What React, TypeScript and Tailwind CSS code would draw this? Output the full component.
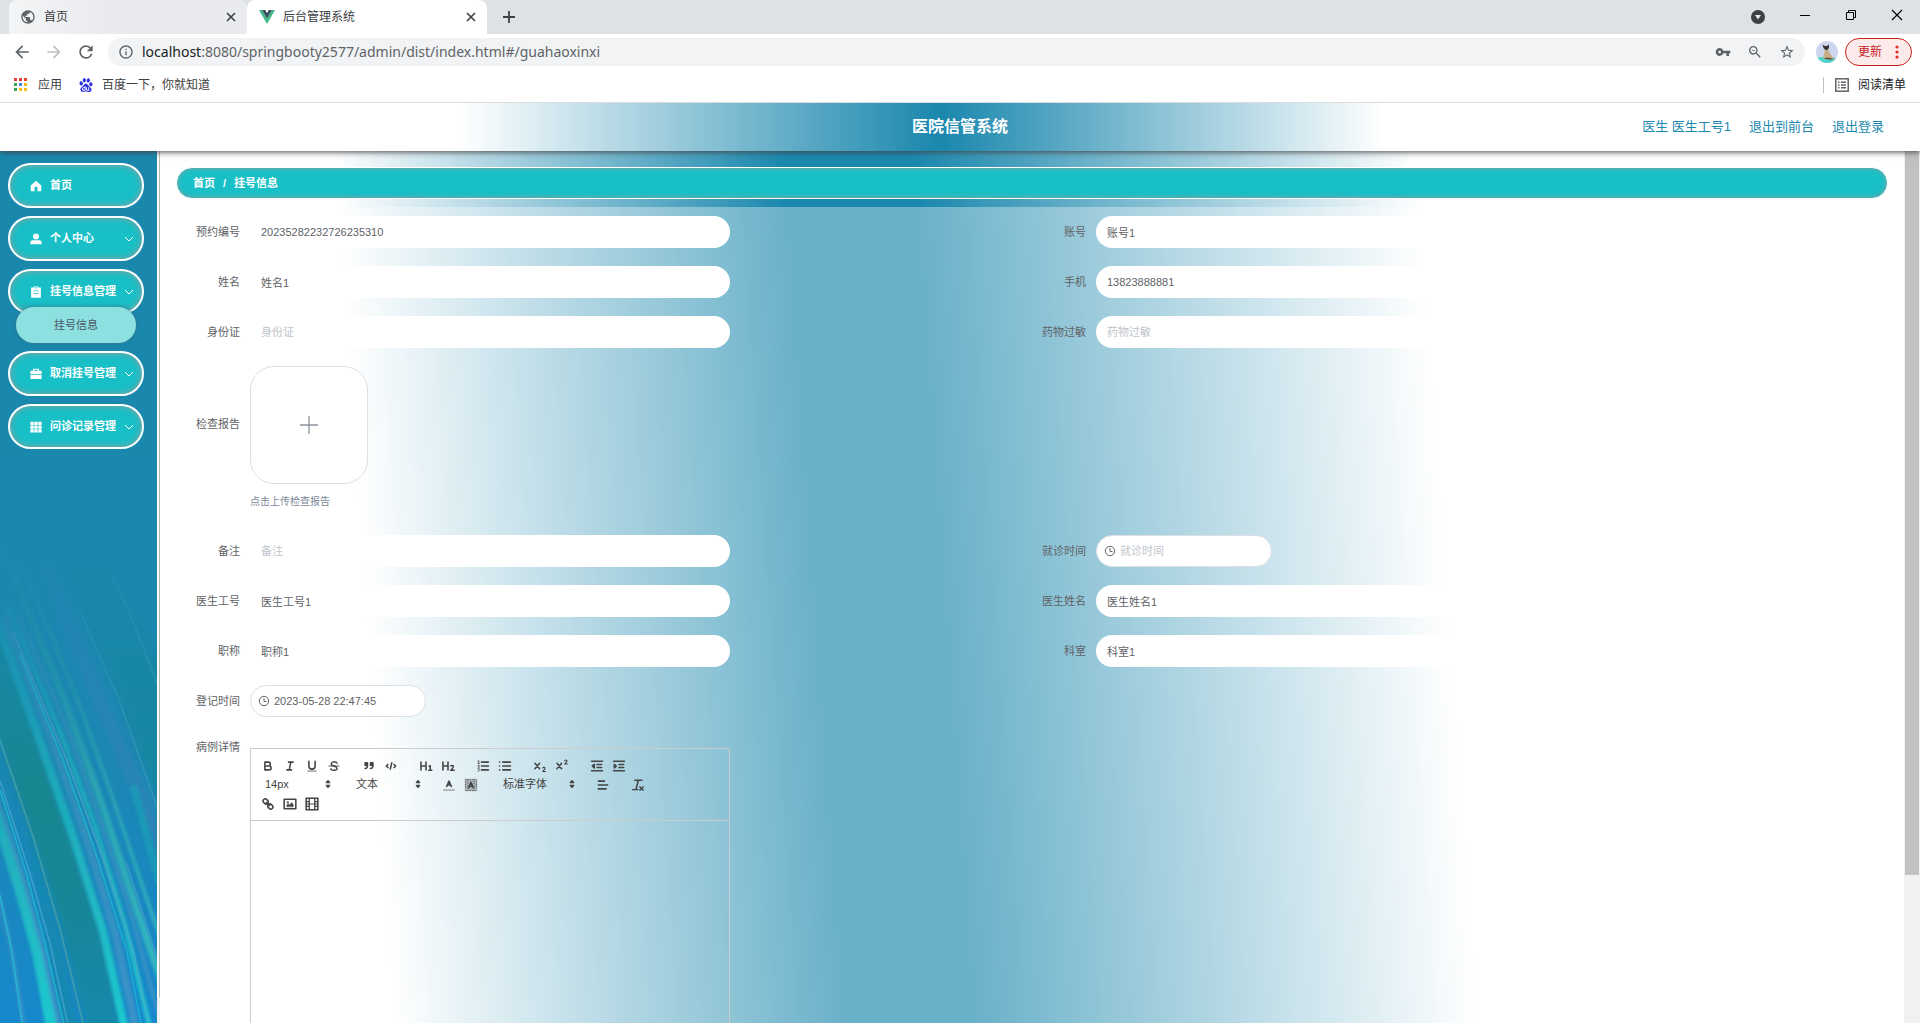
import type { ReactNode } from "react";
import {
  MdArrowBack,
  MdArrowForward,
  MdInfoOutline,
  MdPublic,
  MdRefresh,
  MdStarBorder,
  MdVpnKey,
  MdZoomOut,
} from "react-icons/md";
import { SiBaidu } from "react-icons/si";

/* ---------- browser frame ---------- */

function CloseMark() {
  return (
    <svg viewBox="0 0 10 10" className="size-[10px]" stroke="#3c4043" strokeWidth="1.6" fill="none">
      <path d="M1 1l8 8M9 1l-8 8" />
    </svg>
  );
}

function VueLogo() {
  return (
    <svg viewBox="0 0 16 16" className="size-4">
      <path d="M0 1h3.2L8 9.400 12.800 1H16L8 15z" fill="#41b883" />
      <path d="M3.200 1h3L8 4.200 9.800 1h3L8 9.400z" fill="#35495e" />
    </svg>
  );
}

function TabStrip() {
  return (
    <div className="flex h-[34px] items-stretch bg-[#dee1e6] pl-[9px] text-xs text-[#3c4043]">
      <div className="flex w-[238px] items-center rounded-t-lg bg-gradient-to-r from-[#f4f5f6] to-[#e9ebef] to-40% pr-[11px] pl-[11px]">
        <MdPublic className="size-4 text-[#5f6368]" />
        <span className="ml-2 flex-1">首页</span>
        <button type="button" aria-label="关闭 首页">
          <CloseMark />
        </button>
      </div>
      <div className="flex w-[240px] items-center rounded-t-lg bg-white pr-[11px] pl-3">
        <VueLogo />
        <span className="ml-2 flex-1">后台管理系统</span>
        <button type="button" aria-label="关闭 后台管理系统">
          <CloseMark />
        </button>
      </div>
      <button type="button" aria-label="新标签页" className="ml-4">
        <svg viewBox="0 0 12 12" className="size-3" stroke="#3c4043" strokeWidth="1.8">
          <path d="M6 0v12M0 6h12" />
        </svg>
      </button>
      <div className="ml-auto flex items-center gap-[34px] pr-[17px]">
        <button type="button" aria-label="搜索标签页">
          <svg viewBox="0 0 14 14" className="size-[14px]">
            <circle cx="7" cy="7" r="7" fill="#3c4043" />
            <path d="M4 5h6L7 9.500z" fill="#e8eaed" />
          </svg>
        </button>
        <button type="button" aria-label="最小化" className="pb-1">
          <svg viewBox="0 0 12 12" className="size-3" stroke="#000" shapeRendering="crispEdges">
            <path d="M1 6.500h10" />
          </svg>
        </button>
        <button type="button" aria-label="还原" className="pb-1">
          <svg viewBox="0 0 12 12" className="size-3" stroke="#000" fill="none">
            <path d="M1.500 3.500h7v7h-7zM3.500 3.500v-2h7v7h-2" />
          </svg>
        </button>
        <button type="button" aria-label="关闭" className="pb-1">
          <svg viewBox="0 0 12 12" className="size-3" stroke="#000" strokeWidth="1.200">
            <path d="M1 1l10 10M11 1L1 11" />
          </svg>
        </button>
      </div>
    </div>
  );
}

function Avatar() {
  return (
    <svg viewBox="0 0 22 22" className="size-[22px]">
      <defs>
        <clipPath id="avatar-clip">
          <circle cx="11" cy="11" r="11" />
        </clipPath>
      </defs>
      <g clipPath="url(#avatar-clip)">
        <rect width="22" height="22" fill="#cdd6ee" />
        <path d="M0 17q11-3 22 1v4H0z" fill="#4fd3c8" />
        <path d="M7 17.500l1.500-6 .5-3.500-1-4 1.500 1h1.500l1.500-1-.5 4.500 2 4 4 5-3 1z" fill="#c9ad84" />
        <path d="M6.500 3.500l2 1.500h2.500l2-1.500v3l-1.500 2.500h-2L7.500 7z" fill="#3a3230" />
        <path d="M8 17.500l3-1 7 1.500-4 .8z" fill="#5a4a3c" />
      </g>
    </svg>
  );
}

function AddressBar() {
  return (
    <div className="flex h-[35px] items-center bg-white pr-2 pl-3 text-[#5f6368]">
      <div className="flex items-center gap-3">
        <button type="button" aria-label="后退">
          <MdArrowBack className="size-5" />
        </button>
        <button type="button" aria-label="前进" className="text-[#bdc1c6]">
          <MdArrowForward className="size-5" />
        </button>
        <button type="button" aria-label="重新加载">
          <MdRefresh className="size-5" />
        </button>
      </div>
      <div className="ml-3 flex h-7 flex-1 items-center rounded-full bg-[#f1f3f4] px-[10px]">
        <MdInfoOutline className="size-4" />
        <p className="ml-2 flex-1 font-['Noto_Sans'] text-sm">
          <span className="text-[#202124]">localhost</span>:8080/springbooty2577/admin/dist/index.html#/guahaoxinxi
        </p>
        <div className="flex items-center gap-4">
          <button type="button" aria-label="密码">
            <MdVpnKey className="size-4" />
          </button>
          <button type="button" aria-label="缩放">
            <MdZoomOut className="size-4" />
          </button>
          <button type="button" aria-label="收藏">
            <MdStarBorder className="size-4" />
          </button>
        </div>
      </div>
      <button type="button" aria-label="个人资料" className="ml-[11px]">
        <Avatar />
      </button>
      <button
        type="button"
        className="ml-[7px] flex h-7 w-[67px] items-center justify-between rounded-full border border-[#c5221f] bg-[#fcebea] pr-3 pl-3 text-xs text-[#c5221f]"
      >
        更新
        <svg viewBox="0 0 4 14" className="h-[14px] w-1" fill="#d93025">
          <circle cx="2" cy="2" r="1.600" />
          <circle cx="2" cy="7" r="1.600" />
          <circle cx="2" cy="12" r="1.600" />
        </svg>
      </button>
    </div>
  );
}

const appDots = ["#ea4335", "#ea4335", "#ea4335", "#34a853", "#4285f4", "#fbbc04", "#34a853", "#fbbc04", "#fbbc04"];

function BookmarkBar() {
  return (
    <div className="relative z-20 flex h-[34px] items-center border-b border-[#dadce0] bg-white pr-[14px] pb-[2px] pl-[14px] text-xs text-[#3c4043]">
      <a href="#apps" className="flex items-center gap-[10px]">
        <svg viewBox="0 0 14 14" className="size-[14px]" shapeRendering="crispEdges">
          {appDots.map((c, i) => (
            <rect key={i} x={(i % 3) * 5} y={Math.floor(i / 3) * 5} width="3" height="3" fill={c} />
          ))}
        </svg>
        应用
      </a>
      <a href="#baidu" className="ml-[17px] flex items-center gap-[9px]">
        <SiBaidu className="size-[14px] text-[#2932e1]" />
        百度一下，你就知道
      </a>
      <a href="#reading" className="ml-auto flex items-center gap-[9px] border-l border-[#bdc1c6] pl-[11px] text-[#202124]">
        <svg viewBox="0 0 14 14" className="size-[14px]" fill="none" stroke="#5f6368" strokeWidth="1.500">
          <rect x="0.800" y="0.800" width="12.400" height="12.400" />
          <path d="M3 4.200h1.500M6 4.200h5M3 7h1.500M6 7h5M3 9.800h1.500M6 9.800h5" />
        </svg>
        阅读清单
      </a>
    </div>
  );
}

/* ---------- application header ---------- */

function AppHeader() {
  return (
    <header className="relative z-10 grid h-12 grid-cols-[1fr_auto_1fr] items-center bg-[linear-gradient(90deg,#ffffff_24%,#1a87ad_49%,#ffffff_72%)] shadow-[0_1px_6px_#444444]">
      <h1 className="col-start-2 text-base font-bold text-white">医院信管系统</h1>
      <nav className="flex items-center justify-end gap-[18px] pr-9 text-[13px] text-[#1a87ad]">
        <a href="#user">医生 医生工号1</a>
        <a href="#front">退出到前台</a>
        <a href="#logout">退出登录</a>
      </nav>
    </header>
  );
}

/* ---------- sidebar ---------- */

const homeIcon = <path d="M8 1L1 7.200V15h5v-4.500a2 2 0 0 1 4 0V15h5V7.200z" />;
const userIcon = (
  <>
    <circle cx="8" cy="4.800" r="4" />
    <path d="M0.500 15v-2.500q0-3 3-3h9q3 0 3 3V15z" />
  </>
);
const orderIcon = (
  <path fillRule="evenodd" d="M1.500 2H5V0.500h6V2h3.500v13.500h-13zM4.500 6v1h7V6zM4.500 9.500v1h7v-1zM6 2v1h4V2z" />
);
const caseIcon = (
  <path fillRule="evenodd" d="M0.500 3.500H4V1h8v2.500h3.500V8h-15zM5.500 2.300v1.200h5V2.300zM0.500 9h15v5.500h-15z" />
);
const gridIcon = (
  <path d="M0.500 1h4.500v4.200H0.500zM5.700 1h4.500v4.200H5.700zM11 1h4.500v4.200H11zM0.500 6h4.500v4.200H0.500zM5.700 6h4.500v4.200H5.700zM11 6h4.500v4.200H11zM0.500 11h4.500v4.200H0.500zM5.700 11h4.500v4.200H5.700zM11 11h4.500v4.200H11z" />
);

type MenuEntry = { label: string; icon: ReactNode; expandable?: boolean; child?: string };

const menu: MenuEntry[] = [
  { label: "首页", icon: homeIcon },
  { label: "个人中心", icon: userIcon, expandable: true },
  { label: "挂号信息管理", icon: orderIcon, expandable: true, child: "挂号信息" },
  { label: "取消挂号管理", icon: caseIcon, expandable: true },
  { label: "问诊记录管理", icon: gridIcon, expandable: true },
];

function SidebarArt() {
  return (
    <svg viewBox="0 0 471 1568" preserveAspectRatio="none" className="absolute bottom-0 left-0 h-[573px] w-full" fill="none">
      <defs>
        <linearGradient id="sea" x1="0" y1="0" x2="0" y2="1">
          <stop offset="0" stopColor="#1a87ad" />
          <stop offset="0.550" stopColor="#1b87b4" />
          <stop offset="1" stopColor="#1788cc" />
        </linearGradient>
        <linearGradient id="band" x1="0" y1="480" x2="0" y2="1568" gradientUnits="userSpaceOnUse">
          <stop offset="0" stopColor="#13889c" />
          <stop offset="0.400" stopColor="#12868f" />
          <stop offset="0.700" stopColor="#128696" />
          <stop offset="1" stopColor="#1388ac" />
        </linearGradient>
        <linearGradient id="teal" x1="0" y1="250" x2="0" y2="1568" gradientUnits="userSpaceOnUse">
          <stop offset="0" stopColor="#1a90b0" />
          <stop offset="0.300" stopColor="#1a9fb6" />
          <stop offset="0.650" stopColor="#20b0be" />
          <stop offset="1" stopColor="#1fc8cd" />
        </linearGradient>
        <linearGradient id="mauve" x1="0" y1="300" x2="0" y2="1568" gradientUnits="userSpaceOnUse">
          <stop offset="0" stopColor="#2f8ab2" />
          <stop offset="0.500" stopColor="#3590bb" stopOpacity="0.800" />
          <stop offset="1" stopColor="#3f94c8" stopOpacity="0.900" />
        </linearGradient>
        <linearGradient id="green" x1="0" y1="250" x2="0" y2="1450" gradientUnits="userSpaceOnUse">
          <stop offset="0" stopColor="#2390a8" />
          <stop offset="0.300" stopColor="#2397a8" />
          <stop offset="1" stopColor="#35b8c2" />
        </linearGradient>
        <linearGradient id="rise" x1="0" y1="200" x2="0" y2="900" gradientUnits="userSpaceOnUse">
          <stop offset="0" stopColor="#000" />
          <stop offset="0.450" stopColor="#888" />
          <stop offset="1" stopColor="#fff" />
        </linearGradient>
        <mask id="fade" maskUnits="userSpaceOnUse" x="0" y="0" width="471" height="1568">
          <rect width="471" height="1568" fill="url(#rise)" />
        </mask>
        <filter id="soft8" filterUnits="userSpaceOnUse" x="-60" y="0" width="620" height="1640">
          <feGaussianBlur stdDeviation="11" />
        </filter>
        <filter id="soft4" filterUnits="userSpaceOnUse" x="-60" y="0" width="620" height="1640">
          <feGaussianBlur stdDeviation="5" />
        </filter>
        <filter id="soft1" filterUnits="userSpaceOnUse" x="-60" y="0" width="620" height="1640">
          <feGaussianBlur stdDeviation="2" />
        </filter>
      </defs>
      <rect width="471" height="1568" fill="url(#sea)" />
      <g mask="url(#fade)">
        <g filter="url(#soft8)">
          <path d="M160 240L250 460L360 690L520 1060V640L300 240z" fill="#1687a0" />
          <path d="M-30 420L0 480L100 760L200 1030L300 1300L375 1600H260L180 1290L90 1040L-30 710z" fill="url(#band)" />
          <path d="M110 300L220 560L300 740L400 940L500 1200V1060L350 740L250 520L150 300z" fill="#2a84b6" />
          <path d="M-30 740L40 930L110 1200L190 1600H240L180 1340L90 1070L-10 800z" fill="#1388b0" />
        </g>
        <g filter="url(#soft4)">
          <path d="M-10 465L110 770L220 1060L310 1320L378 1600" stroke="url(#teal)" strokeWidth="24" />
          <path d="M10 450L150 780L255 1050L345 1320L412 1600" stroke="url(#mauve)" strokeWidth="22" />
          <path d="M20 420L180 770L285 1030L375 1300L455 1600" stroke="url(#teal)" strokeWidth="14" />
          <path d="M50 440L205 770L315 1050L400 1290L480 1560" stroke="url(#mauve)" strokeWidth="12" />
          <path d="M0 250L80 430L200 700L310 980L400 1230L490 1470" stroke="url(#green)" strokeWidth="20" />
          <path d="M20 230L110 410L240 700L345 970L430 1200L490 1360" stroke="url(#green)" strokeWidth="10" />
          <path d="M400 920L480 1190" stroke="#1a9db8" strokeWidth="22" opacity="0.800" />
          <path d="M-10 990L70 1230L115 1380L160 1600" stroke="url(#teal)" strokeWidth="36" />
          <path d="M-10 950L70 1170L130 1370L184 1600" stroke="url(#mauve)" strokeWidth="14" />
          <path d="M-10 1190L35 1370L76 1600" stroke="url(#mauve)" strokeWidth="12" />
        </g>
        <g filter="url(#soft1)" strokeWidth="5">
          <path d="M-5 780L100 1060L180 1310L255 1590" stroke="#4aa0a8" opacity="0.800" />
          <path d="M0 905L90 1160L150 1350L208 1590" stroke="#48a8d0" opacity="0.700" />
          <path d="M0 930L80 1160L135 1350L196 1590" stroke="#1fb8d0" opacity="0.800" />
          <path d="M0 1220L35 1370L70 1590" stroke="#22bcd2" opacity="0.800" />
          <path d="M40 500L200 850L310 1120L400 1370L450 1590" stroke="#5aa5cc" opacity="0.600" />
          <path d="M60 560L190 850L290 1110L380 1370L428 1590" stroke="#1bc4d6" opacity="0.600" />
          <path d="M240 440L360 690L480 1000" stroke="#3c9bb8" opacity="0.600" />
          <path d="M330 330L400 470L480 660" stroke="#3297b5" opacity="0.800" />
          <path d="M380 1130L471 1390" stroke="#4a9cd0" opacity="0.600" />
        </g>
      </g>
    </svg>
  );
}

function Sidebar() {
  return (
    <aside className="flex w-40 shrink-0">
      <div className="relative flex-1 overflow-hidden bg-[#1a87ad]">
        <SidebarArt />
        <nav className="relative flex flex-col gap-2 pt-3 pr-[13px] pl-2">
          {menu.map((m) => (
            <div key={m.label}>
              <button
                type="button"
                className="flex h-[45px] w-full items-center rounded-full border-2 border-white bg-[#18bfc6] pr-2 pl-5 text-[11px] font-bold text-white shadow-[inset_0_0_6px_#999999]"
              >
                <svg viewBox="0 0 16 16" className="size-3" fill="currentColor">
                  {m.icon}
                </svg>
                <span className="ml-2 flex-1 text-left">{m.label}</span>
                {m.expandable && (
                  <svg viewBox="0 0 10 10" className="size-[10px]" fill="none" stroke="currentColor">
                    <path d="M1 3l4 4 4-4" />
                  </svg>
                )}
              </button>
              {m.child && (
                <a
                  href="#guahaoxinxi"
                  className="relative mx-2 -mt-[7px] flex h-9 items-center justify-center rounded-[18px] bg-[#8ce0e0] text-[11px] text-[#4b5563] shadow-[0_0_5px_#33778a]"
                >
                  {m.child}
                </a>
              )}
            </div>
          ))}
        </nav>
      </div>
      <div className="w-[3px] bg-[#f1f1f1]">
        <div className="h-[97%] border-r border-[#b8b8b8] bg-white" />
      </div>
    </aside>
  );
}

/* ---------- form ---------- */

function Row({ children }: { children: ReactNode }) {
  return <div className="grid grid-cols-2">{children}</div>;
}

function FieldLabel({ id, children }: { id: string; children: ReactNode }) {
  return (
    <label htmlFor={id} className="w-16 shrink-0 pr-[10px] text-right whitespace-nowrap">
      {children}
    </label>
  );
}

function TextField({ id, label, value }: { id: string; label: string; value?: string }) {
  return (
    <div className="flex h-8 items-center">
      <FieldLabel id={id}>{label}</FieldLabel>
      <input
        id={id}
        type="text"
        defaultValue={value}
        placeholder={label}
        className="h-8 w-[480px] rounded-full bg-white px-[11px] placeholder:text-[#c0c4cc]"
      />
    </div>
  );
}

function DateField({ id, label, value }: { id: string; label: string; value?: string }) {
  return (
    <div className="flex h-8 items-center">
      <FieldLabel id={id}>{label}</FieldLabel>
      <div className="relative">
        <input
          id={id}
          type="text"
          defaultValue={value}
          placeholder={label}
          className="h-8 w-44 rounded-full border border-[#dcdfe6] bg-white pr-3 pl-[23px] placeholder:text-[#c0c4cc]"
        />
        <svg viewBox="0 0 12 12" className="pointer-events-none absolute top-[10px] left-2 size-3" fill="none" stroke="#606266">
          <circle cx="6" cy="6" r="4.700" />
          <path d="M6 3V6.500h2.500" />
        </svg>
      </div>
    </div>
  );
}

function UploadField() {
  return (
    <div className="flex h-[151px] items-start">
      <label htmlFor="report" className="flex h-[117px] w-16 shrink-0 items-center justify-end pr-[10px] whitespace-nowrap">
        检查报告
      </label>
      <div>
        <button
          id="report"
          type="button"
          aria-label="上传检查报告"
          className="flex size-[118px] items-center justify-center rounded-3xl border border-[#dcdfe6] bg-white"
        >
          <svg viewBox="0 0 18 18" className="size-[18px]" stroke="#8c939d" strokeWidth="1.300">
            <path d="M9 0v18M0 9h18" />
          </svg>
        </button>
        <p className="mt-[10px] text-[10px] leading-4 text-[#7c8797]">点击上传检查报告</p>
      </div>
    </div>
  );
}

/* ---------- rich text editor ---------- */

function ToolButton({ name, children }: { name: string; children: ReactNode }) {
  return (
    <button type="button" aria-label={name} className="flex h-[19px] w-[22px] items-center justify-center">
      <svg
        viewBox="0 0 18 18"
        className="size-[14px]"
        fill="none"
        stroke="#444444"
        strokeWidth="2"
        strokeLinecap="round"
        strokeLinejoin="round"
      >
        {children}
      </svg>
    </button>
  );
}

function Group({ children }: { children: ReactNode }) {
  return <div className="flex">{children}</div>;
}

function SizePicker() {
  return (
    <svg viewBox="0 0 18 18" className="pointer-events-none absolute top-[2px] right-0 size-[14px]" fill="#444444" stroke="#444444" strokeWidth="2" strokeLinejoin="round">
      <path d="M7 11l2 2 2-2z" />
      <path d="M7 7l2-2 2 2z" />
    </svg>
  );
}

const pickerClass =
  "h-[19px] w-full appearance-none bg-transparent pl-2 text-[11px] text-[#444444] outline-none";

function Editor() {
  return (
    <div className="mt-[13px] flex w-[480px] flex-col border border-[#cccccc]">
      <div className="flex flex-col border-b border-[#cccccc] pt-[7px] pb-[7px] pl-[6px]">
        <div className="flex gap-[13px]">
          <Group>
            <ToolButton name="粗体">
              <path d="M5 4h4.500a2.500 2.500 0 0 1 0 5H5zM5 9h5.500a2.500 2.500 0 0 1 0 5H5z" />
            </ToolButton>
            <ToolButton name="斜体">
              <path d="M7 4h6M5 14h6M8 14l2-10" />
            </ToolButton>
            <ToolButton name="下划线">
              <path d="M5 3v6a4 4 0 0 0 8 0V3" />
              <path d="M3.500 15.500h11" strokeWidth="1" />
            </ToolButton>
            <ToolButton name="删除线">
              <path d="M2.500 9h13" strokeWidth="1.200" />
              <path d="M13 5.500Q12 3.500 9 3.500T5.500 6Q5.500 8 9 9t4 3q0 2.500-4 2.500T5 12.500" strokeWidth="1.800" />
            </ToolButton>
          </Group>
          <Group>
            <ToolButton name="引用">
              <rect x="4" y="5" width="3" height="3" fill="#444444" />
              <rect x="11" y="5" width="3" height="3" fill="#444444" />
              <path d="M7 8c0 4-2.200 4.300-3 4.300M14 8c0 4-2.200 4.300-3 4.300" />
            </ToolButton>
            <ToolButton name="代码">
              <path d="M5 7L3 9l2 2M13 7l2 2-2 2M10 5L8 13" />
            </ToolButton>
          </Group>
          <Group>
            <ToolButton name="标题 1">
              <path d="M2.500 4v10M9 4v10M2.500 9H9" />
              <path d="M13 9.500l1.500-1v5.500M12.500 14.500h4" strokeWidth="1.800" />
            </ToolButton>
            <ToolButton name="标题 2">
              <path d="M2.500 4v10M9 4v10M2.500 9H9" />
              <path d="M12.500 9q2-1.500 3.500 0 .5 1.500-3.500 5.500H17" strokeWidth="1.800" />
            </ToolButton>
          </Group>
          <Group>
            <ToolButton name="有序列表">
              <path d="M7 4h9M7 9h9M7 14h9" />
              <path d="M2.500 2.500l1-.5v3.500M2.500 5.500h2M2.500 8h1.800l-1.800 2.500h2M2.500 12.500h2L3.500 14l1 .8-1 1h-1" strokeWidth="1" />
            </ToolButton>
            <ToolButton name="无序列表">
              <path d="M6 4h10M6 9h10M6 14h10M2 4h.1M2 9h.1M2 14h.1" />
            </ToolButton>
          </Group>
          <Group>
            <ToolButton name="下标">
              <path d="M2.500 5.500l6 7M8.500 5.500l-6 7" />
              <path d="M12.500 11.500q1.500-1.500 3 0 0 1.500-3 4.500H16" strokeWidth="1.400" />
            </ToolButton>
            <ToolButton name="上标">
              <path d="M2.500 5.500l6 7M8.500 5.500l-6 7" />
              <path d="M12.500 2q1.500-1.500 3 0 0 1.500-3 4.500H16" strokeWidth="1.400" />
            </ToolButton>
          </Group>
          <Group>
            <ToolButton name="减少缩进">
              <path d="M2 3h14M2 15h14M9 7h6M9 11h6" />
              <path d="M5.500 7v4.500L3 9z" fill="#444444" />
            </ToolButton>
            <ToolButton name="增加缩进">
              <path d="M2 3h14M2 15h14M9 7h6M9 11h6" />
              <path d="M3 7v4.500L5.500 9z" fill="#444444" />
            </ToolButton>
          </Group>
        </div>
        <div className="flex gap-[13px]">
          <div className="relative w-[78px]">
            <select aria-label="字号" className={pickerClass}>
              <option>14px</option>
            </select>
            <SizePicker />
          </div>
          <div className="relative w-[77px]">
            <select aria-label="段落" className={pickerClass}>
              <option>文本</option>
            </select>
            <SizePicker />
          </div>
          <Group>
            <ToolButton name="文字颜色">
              <path d="M2 15.500h14" strokeWidth="1.200" stroke="#777777" />
              <path d="M6 11L9 4l3 7M7 9h4" />
            </ToolButton>
            <ToolButton name="背景颜色">
              <rect x="1" y="1" width="16" height="16" fill="#444444" fillOpacity="0.350" stroke="none" />
              <path d="M2 2h14M2 16h14M2 5v9M16 5v9M5 4v11M13 4v11" strokeWidth="1" strokeDasharray="0.500 2.500" />
              <path d="M6 12.500l3-7 3 7M7 10.500h4" />
            </ToolButton>
          </Group>
          <div className="relative w-[84px]">
            <select aria-label="字体" className={pickerClass}>
              <option>标准字体</option>
            </select>
            <SizePicker />
          </div>
          <Group>
            <ToolButton name="对齐">
              <path d="M3 4h8M3 9h12M3 14h10" />
            </ToolButton>
          </Group>
          <Group>
            <ToolButton name="清除格式">
              <path d="M5 3h9M6.500 14L9.500 3M11.500 11.500l4 4M15.500 11.500l-4 4" />
              <path d="M2 15h7" strokeWidth="1.500" />
            </ToolButton>
          </Group>
        </div>
        <div className="flex">
          <ToolButton name="链接">
            <rect x="2.500" y="3" width="7" height="5.500" rx="2.700" transform="rotate(45 6 5.750)" />
            <rect x="8.500" y="9.500" width="7" height="5.500" rx="2.700" transform="rotate(45 12 12.250)" />
            <path d="M7 7l4 4" />
          </ToolButton>
          <ToolButton name="图片">
            <rect x="1.500" y="3" width="15" height="12" />
            <circle cx="6" cy="7" r="0.500" />
            <path d="M5 12v-1.500l2-1.500 1.500 1.500L11 7.500l2 2V12z" fill="#444444" strokeWidth="1" />
          </ToolButton>
          <ToolButton name="视频">
            <rect x="1.500" y="1.500" width="15" height="15" />
            <path d="M5.500 2v14M12.500 2v14M5.500 9h7M2 6h3M2 9h3M2 12h3M13 6h3M13 9h3M13 12h3" strokeWidth="1.600" />
          </ToolButton>
        </div>
      </div>
      <textarea id="detail" className="h-80 w-full resize-none bg-transparent p-3 outline-none" />
    </div>
  );
}

function RecordForm() {
  return (
    <form className="flex flex-1 flex-col gap-[18px] bg-white/35 px-[26px] pt-[9px] text-[11px] text-[#606266]">
      <Row>
        <TextField id="order" label="预约编号" value="20235282232726235310" />
        <TextField id="account" label="账号" value="账号1" />
      </Row>
      <Row>
        <TextField id="name" label="姓名" value="姓名1" />
        <TextField id="phone" label="手机" value="13823888881" />
      </Row>
      <Row>
        <TextField id="idcard" label="身份证" />
        <TextField id="allergy" label="药物过敏" />
      </Row>
      <UploadField />
      <Row>
        <TextField id="note" label="备注" />
        <DateField id="visit" label="就诊时间" />
      </Row>
      <Row>
        <TextField id="doctor-id" label="医生工号" value="医生工号1" />
        <TextField id="doctor-name" label="医生姓名" value="医生姓名1" />
      </Row>
      <Row>
        <TextField id="title" label="职称" value="职称1" />
        <TextField id="dept" label="科室" value="科室1" />
      </Row>
      <DateField id="registered" label="登记时间" value="2023-05-28 22:47:45" />
      <div className="flex items-start">
        <label htmlFor="detail" className="w-16 shrink-0 pr-[10px] text-right leading-6 whitespace-nowrap">
          病例详情
        </label>
        <Editor />
      </div>
    </form>
  );
}

function Breadcrumb() {
  return (
    <nav
      aria-label="面包屑"
      className="mx-4 mt-4 mb-2 flex h-8 shrink-0 items-center gap-2 rounded-full border border-white bg-[#18bfc6] px-4 text-[11px] font-bold text-white shadow-[inset_0_0_5px_#999999]"
    >
      <a href="#home">首页</a>
      <span>/</span>
      <span>挂号信息</span>
    </nav>
  );
}

export default function App() {
  return (
    <div className="flex h-screen flex-col overflow-hidden bg-white font-['Liberation_Sans','Noto_Sans_CJK_SC',sans-serif]">
      <TabStrip />
      <AddressBar />
      <BookmarkBar />
      <AppHeader />
      <div className="flex min-h-0 flex-1">
        <Sidebar />
        <main className="flex min-w-0 flex-1 flex-col overflow-hidden bg-[linear-gradient(86deg,#ffffff_13%,#1a87ad_38%,#1a87ad_45%,#ffffff_73%)]">
          <Breadcrumb />
          <RecordForm />
        </main>
        <div className="w-4 shrink-0 bg-[#f1f1f1] px-px">
          <div className="h-[83%] bg-[#c1c1c1]" />
        </div>
      </div>
    </div>
  );
}
